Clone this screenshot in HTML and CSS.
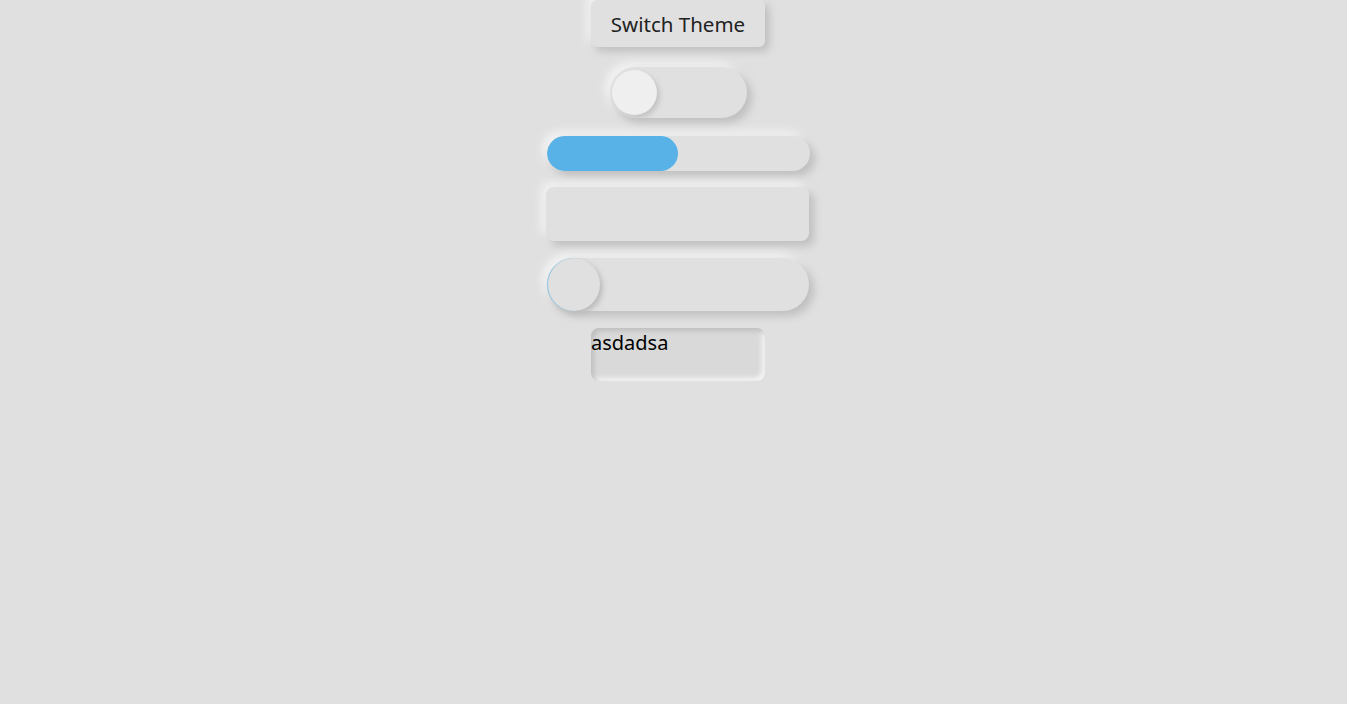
FILE: index.html
```html
<!DOCTYPE html>
<html>
<head>
<meta charset="utf-8">
<link rel="stylesheet" href="styles.css">
</head>
<body>
<main class="stack">
  <button class="theme-btn">Switch Theme</button>
  <div class="toggle"><span class="toggle-knob"></span></div>
  <div class="progress"><div class="progress-fill" style="width:50%"></div></div>
  <div class="card"></div>
  <div class="slider"><span class="slider-knob"></span></div>
  <div class="field"><span class="field-text">asdadsa</span></div>
</main>
</body>
</html>
```
FILE: styles.css
```css
html, body {
  margin: 0;
  padding: 0;
  background: #e0e0e0;
  height: 100%;
}
body {
  font-family: "Noto Sans", "Open Sans", sans-serif;
}
.stack {
  display: flex;
  flex-direction: column;
  align-items: center;
  padding-left: 9px;
}
.theme-btn {
  width: 174px;
  height: 47px;
  border: none;
  border-radius: 6px;
  background: #e0e0e0;
  font-family: "Noto Sans", "Open Sans", sans-serif;
  font-size: 20.5px;
  color: #222;
  padding: 0;
  box-shadow: 4px 4px 8px #bcbcbc, -4px -4px 8px #f4f4f4;
}
.toggle {
  margin-top: 20px;
  width: 137px;
  height: 51px;
  border-radius: 26px;
  background: #e0e0e0;
  box-shadow: 5px 5px 8px #bfbfbf, -5px -5px 8px #f2f2f2;
  display: flex;
  align-items: center;
  padding-left: 2px;
  box-sizing: border-box;
}
.toggle-knob {
  width: 45px;
  height: 45px;
  border-radius: 50%;
  background: #efefef;
  box-shadow: 3px 3px 5px #c4c4c4;
}
.progress {
  margin-top: 18px;
  width: 263px;
  height: 35px;
  border-radius: 18px;
  background: #e0e0e0;
  box-shadow: 5px 5px 8px #bfbfbf, -5px -5px 8px #f2f2f2;
  overflow: hidden;
}
.progress-fill {
  height: 100%;
  border-radius: 18px;
  background: #58b2e8;
}
.card {
  margin-top: 16px;
  margin-left: -1px;
  width: 263px;
  height: 54px;
  border-radius: 8px;
  background: #e0e0e0;
  box-shadow: 5px 5px 8px #bfbfbf, -5px -5px 8px #f2f2f2;
}
.slider {
  margin-top: 17px;
  width: 262px;
  height: 53px;
  border-radius: 27px;
  background: #e0e0e0;
  box-shadow: 5px 5px 8px #bfbfbf, -5px -5px 8px #f2f2f2;
  display: flex;
  align-items: center;
}
.slider-knob {
  width: 53px;
  height: 53px;
  border-radius: 50%;
  background: #e0e0e0;
  box-shadow: inset 1px 0 0 rgba(91, 178, 232, 0.6), 3px 3px 5px #bdbdbd;
}
.field {
  margin-top: 17px;
  width: 174px;
  height: 53px;
  border-radius: 8px;
  background: #d9d9d9;
  box-shadow: inset 3px 3px 5px #bfbfbf, inset -3px -3px 5px #f6f6f6;
  box-sizing: border-box;
}
.field-text {
  display: block;
  font-size: 20px;
  line-height: 24px;
  margin-top: 3px;
  color: #000;
}
```
